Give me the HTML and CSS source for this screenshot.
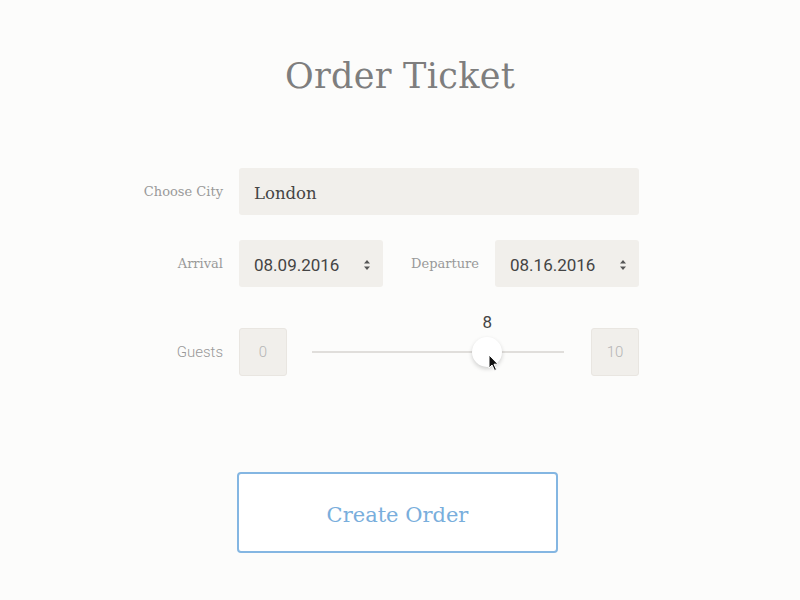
FILE: index.html
```html
<!DOCTYPE html>
<html lang="en">
<head>
<meta charset="utf-8">
<title>Order Ticket</title>
<link rel="stylesheet" href="styles.css">
</head>
<body>
<main class="page">
  <h1 class="title">Order Ticket</h1>
  <form class="form">
    <div class="row">
      <label class="label">Choose City</label>
      <div class="field field-city">London</div>
    </div>
    <div class="row">
      <label class="label">Arrival</label>
      <div class="dates">
        <div class="field field-date"><span>08.09.2016</span>
          <svg class="spin" width="8" height="12" viewBox="0 0 8 12"><path d="M4 1 L7 4.5 H1 Z M4 11 L7 7.5 H1 Z" fill="#555"/></svg>
        </div>
        <label class="label label-inline">Departure</label>
        <div class="field field-date"><span>08.16.2016</span>
          <svg class="spin" width="8" height="12" viewBox="0 0 8 12"><path d="M4 1 L7 4.5 H1 Z M4 11 L7 7.5 H1 Z" fill="#555"/></svg>
        </div>
      </div>
    </div>
    <div class="row row-guests">
      <label class="label label-sans">Guests</label>
      <div class="guests">
        <div class="num">0</div>
        <div class="slider">
          <div class="track"></div>
          <div class="thumb" style="left: 69.6%;">
            <span class="thumb-value">8</span>
            <span class="knob"></span>
            <svg class="cursor" width="12" height="18" viewBox="0 0 12 18"><path d="M1 1 L1 14 L4 11 L6.5 16.5 L8.5 15.6 L6 10.2 L10 10.2 Z" fill="#111" stroke="#fff" stroke-width="1"/></svg>
          </div>
        </div>
        <div class="num">10</div>
      </div>
    </div>
  </form>
  <div class="actions">
    <button class="btn" type="button">Create Order</button>
  </div>
</main>
</body>
</html>
```
FILE: styles.css
```css
html, body {
  margin: 0;
  padding: 0;
  background: #fcfcfb;
}

.page {
  width: 800px;
  height: 600px;
  overflow: hidden;
}

.title {
  margin: 0;
  padding-top: 54px;
  text-align: center;
  font-family: "DejaVu Serif", "Liberation Serif", serif;
  font-weight: 300;
  font-size: 35px;
  line-height: 44px;
  color: #7e7e7e;
  letter-spacing: 0.3px;
}

.form {
  width: 516px;
  padding-right: 38px;
  margin: 70px auto 0;
  display: flex;
  flex-direction: column;
  gap: 25px;
}

.row {
  display: grid;
  grid-template-columns: 100px 400px;
  column-gap: 16px;
  align-items: center;
}

.row-guests {
  margin-top: 16px;
}

.label {
  text-align: right;
  font-family: "DejaVu Serif", "Liberation Serif", serif;
  font-size: 13px;
  color: #999;
  white-space: nowrap;
}

.label-sans {
  font-family: Roboto, "Liberation Sans", sans-serif;
  font-weight: 300;
  font-size: 15px;
}

.field {
  height: 47px;
  background: #f1efeb;
  border-radius: 3px;
  box-sizing: border-box;
  padding: 0 15px;
  display: flex;
  align-items: center;
  color: #444;
}

.field-city {
  font-family: "DejaVu Serif", "Liberation Serif", serif;
  font-size: 16.5px;
  padding-top: 3px;
}

.dates {
  display: grid;
  grid-template-columns: 144px 1fr 144px;
  align-items: center;
}

.label-inline {
  padding-right: 16px;
}

.field-date {
  justify-content: space-between;
  font-family: Roboto, "Liberation Sans", sans-serif;
  font-size: 17px;
  padding-right: 12px;
  padding-top: 2px;
}

.spin {
  display: block;
}

.guests {
  display: grid;
  grid-template-columns: 48px 1fr 48px;
  align-items: center;
}

.num {
  height: 48px;
  box-sizing: border-box;
  border: 1px solid #e9e6e1;
  background: #f1efeb;
  border-radius: 3px;
  display: flex;
  align-items: center;
  justify-content: center;
  font-family: Roboto, "Liberation Sans", sans-serif;
  font-weight: 300;
  font-size: 15px;
  color: #b5b5b5;
}

.slider {
  position: relative;
  margin: 0 27px 0 25px;
  height: 48px;
  display: flex;
  align-items: center;
}

.track {
  flex: 1;
  height: 2px;
  background: #e0dedb;
}

.thumb {
  position: absolute;
  top: 50%;
  width: 0;
  height: 0;
}

.knob {
  position: absolute;
  left: -15px;
  top: -15px;
  width: 30px;
  height: 30px;
  border-radius: 50%;
  background: #fff;
  box-shadow: 0 2px 4px rgba(0, 0, 0, 0.18);
}

.thumb-value {
  position: absolute;
  left: -10px;
  width: 20px;
  top: -40px;
  text-align: center;
  font-family: Roboto, "Liberation Sans", sans-serif;
  font-size: 17px;
  color: #444;
}

.cursor {
  position: absolute;
  left: 1px;
  top: 2px;
}

.actions {
  display: flex;
  justify-content: center;
  margin-top: 96px;
  padding-right: 5px;
}

.btn {
  width: 321px;
  height: 81px;
  box-sizing: border-box;
  border: 2px solid #84b6e2;
  border-radius: 4px;
  background: #fff;
  font-family: "DejaVu Serif", "Liberation Serif", serif;
  font-size: 21px;
  color: #79aedc;
  padding: 4px 0 0;
}
```
